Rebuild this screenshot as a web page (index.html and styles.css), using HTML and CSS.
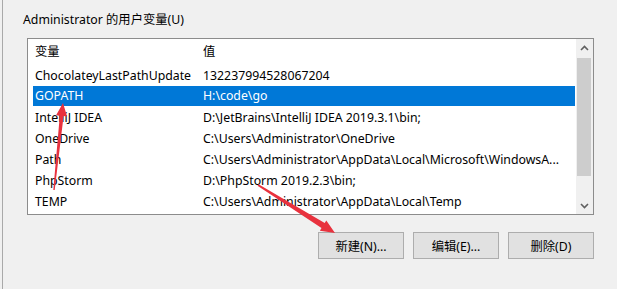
FILE: index.html
```html
<!DOCTYPE html>
<html lang="zh-CN">
<head>
<meta charset="utf-8">
<title>用户变量</title>
<link rel="stylesheet" href="styles.css">
</head>
<body>
<div class="frame">
  <div class="panel">
    <div class="group-label">Administrator 的用户变量(U)</div>
    <div class="listbox">
      <div class="list">
        <div class="row header"><span class="name">变量</span><span class="value">值</span></div>
        <div class="row"><span class="name">ChocolateyLastPathUpdate</span><span class="value">132237994528067204</span></div>
        <div class="row selected"><span class="name">GOPATH</span><span class="value">H:\code\go</span></div>
        <div class="row"><span class="name">IntelliJ IDEA</span><span class="value">D:\JetBrains\IntelliJ IDEA 2019.3.1\bin;</span></div>
        <div class="row"><span class="name">OneDrive</span><span class="value">C:\Users\Administrator\OneDrive</span></div>
        <div class="row"><span class="name">Path</span><span class="value">C:\Users\Administrator\AppData\Local\Microsoft\WindowsA...</span></div>
        <div class="row"><span class="name">PhpStorm</span><span class="value">D:\PhpStorm 2019.2.3\bin;</span></div>
        <div class="row"><span class="name">TEMP</span><span class="value">C:\Users\Administrator\AppData\Local\Temp</span></div>
      </div>
      <div class="scrollbar">
        <div class="sb-btn"><svg width="9" height="6" viewBox="0 0 9 6"><path d="M1 5 L4.5 1.5 L8 5" fill="none" stroke="#606060" stroke-width="1.6"/></svg></div>
        <div class="sb-track"><div class="sb-thumb"></div></div>
        <div class="sb-btn"><svg width="9" height="6" viewBox="0 0 9 6"><path d="M1 1 L4.5 4.5 L8 1" fill="none" stroke="#606060" stroke-width="1.6"/></svg></div>
      </div>
    </div>
    <div class="buttons">
      <button class="btn">新建(N)...</button>
      <button class="btn">编辑(E)...</button>
      <button class="btn">删除(D)</button>
    </div>
  </div>
</div>
<svg class="annotations" width="617" height="289" viewBox="0 0 617 289">
  <polygon fill="#e8323e" points="53.3,190 59.8,115.7 56.1,115.3 63,103 67.1,116.5 63.6,116.1 54.7,190"/>
  <polygon fill="#e8323e" points="257.5,185.8 321.5,228.1 319.9,230.7 335,233 326.3,220.5 324.7,223.1 258.5,184.2"/>
</svg>
</body>
</html>
```

FILE: styles.css
```css
html, body {
  margin: 0;
  padding: 0;
}
body {
  width: 617px;
  height: 289px;
  background: #f0f0f0;
  font-family: "Noto Sans", "Noto Sans CJK SC", sans-serif;
  font-size: 12.3px;
  color: #000;
  overflow: hidden;
  position: relative;
}
.frame {
  margin-left: 2px;
  height: 289px;
  border-left: 1px solid #a9a9a9;
  box-sizing: border-box;
}
.panel {
  padding-top: 12px;
}
.group-label {
  margin-left: 20px;
  height: 16px;
  line-height: 16px;
}
.listbox {
  margin-left: 24px;
  margin-top: 10px;
  width: 567px;
  height: 177px;
  box-sizing: border-box;
  border: 1px solid #8c8c8c;
  background: #fff;
  display: flex;
}
.list {
  flex: 1;
  padding-left: 5px;
  padding-right: 1px;
}
.row {
  display: flex;
  height: 21px;
  line-height: 21px;
  white-space: nowrap;
  overflow: hidden;
}
.row.header {
  height: 26px;
  line-height: 26px;
}
.row .name {
  width: 168px;
  padding-left: 2px;
  flex: none;
}
.row .value {
  flex: 1;
  overflow: hidden;
}
.row.selected {
  background: #0078d7;
  color: #fff;
  height: 20px;
  line-height: 20px;
  margin-bottom: 1px;
}
.scrollbar {
  width: 17px;
  background: #f0f0f0;
  display: flex;
  flex-direction: column;
}
.sb-btn {
  height: 17px;
  display: flex;
  align-items: center;
  justify-content: center;
}
.sb-track {
  flex: 1;
  padding: 2px 2px 0 1px;
}
.sb-thumb {
  height: 118px;
  background: #cdcdcd;
}
.buttons {
  display: flex;
  justify-content: flex-end;
  gap: 9px;
  width: 591px;
  margin-top: 17px;
}
.btn {
  width: 86px;
  height: 27px;
  box-sizing: border-box;
  background: #e1e1e1;
  border: 1px solid #adadad;
  font-family: "Noto Sans", "Noto Sans CJK SC", sans-serif;
  font-size: 12.3px;
  color: #000;
  padding: 0;
}
.annotations {
  position: absolute;
  left: 0;
  top: 0;
  pointer-events: none;
}
```
